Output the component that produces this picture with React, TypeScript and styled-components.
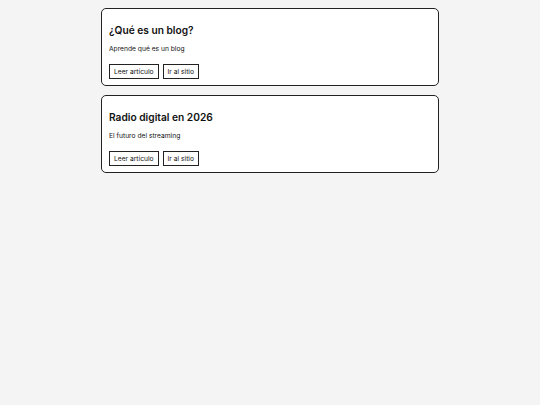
import React from 'react';
import styled, { createGlobalStyle } from 'styled-components';

const GlobalStyle = createGlobalStyle`
  html, body {
    margin: 0;
    background: #f4f4f4;
    font-family: Inter, "Noto Sans", sans-serif;
    color: #111;
  }
`;

const posts = [
  { title: '¿Qué es un blog?', text: 'Aprende qué es un blog' },
  { title: 'Radio digital en 2026', text: 'El futuro del streaming' },
];

const Page = styled.main`
  width: 338px;
  margin: 0 auto;
  padding-top: 8px;
  display: flex;
  flex-direction: column;
  gap: 9px;
`;

const Card = styled.article`
  background: #fff;
  border: 1px solid #222;
  border-radius: 5px;
  padding: 7px 7px 6px;
`;

const Title = styled.h2`
  margin: 8px 0 0;
  font-size: 10.2px;
  line-height: 13px;
  font-weight: 600;
`;

const Text = styled.p`
  margin: 7px 0 0;
  font-size: 6.7px;
  line-height: 10px;
`;

const Actions = styled.div`
  display: flex;
  gap: 4px;
  margin-top: 10px;
`;

const Button = styled.button`
  height: 15px;
  padding: 0 4px;
  border: 1px solid #222;
  border-radius: 0;
  background: #fff;
  font-family: inherit;
  font-size: 6.7px;
  color: #111;
  cursor: pointer;
`;

const App: React.FC = () => {
  return (
    <>
      <GlobalStyle />
      <Page>
        {posts.map((p, index) => (
          <Card key={index}>
            <Title>{p.title}</Title>
            <Text>{p.text}</Text>
            <Actions>
              <Button>Leer artículo</Button>
              <Button>Ir al sitio</Button>
            </Actions>
          </Card>
        ))}
      </Page>
    </>
  );
};

export default App;
